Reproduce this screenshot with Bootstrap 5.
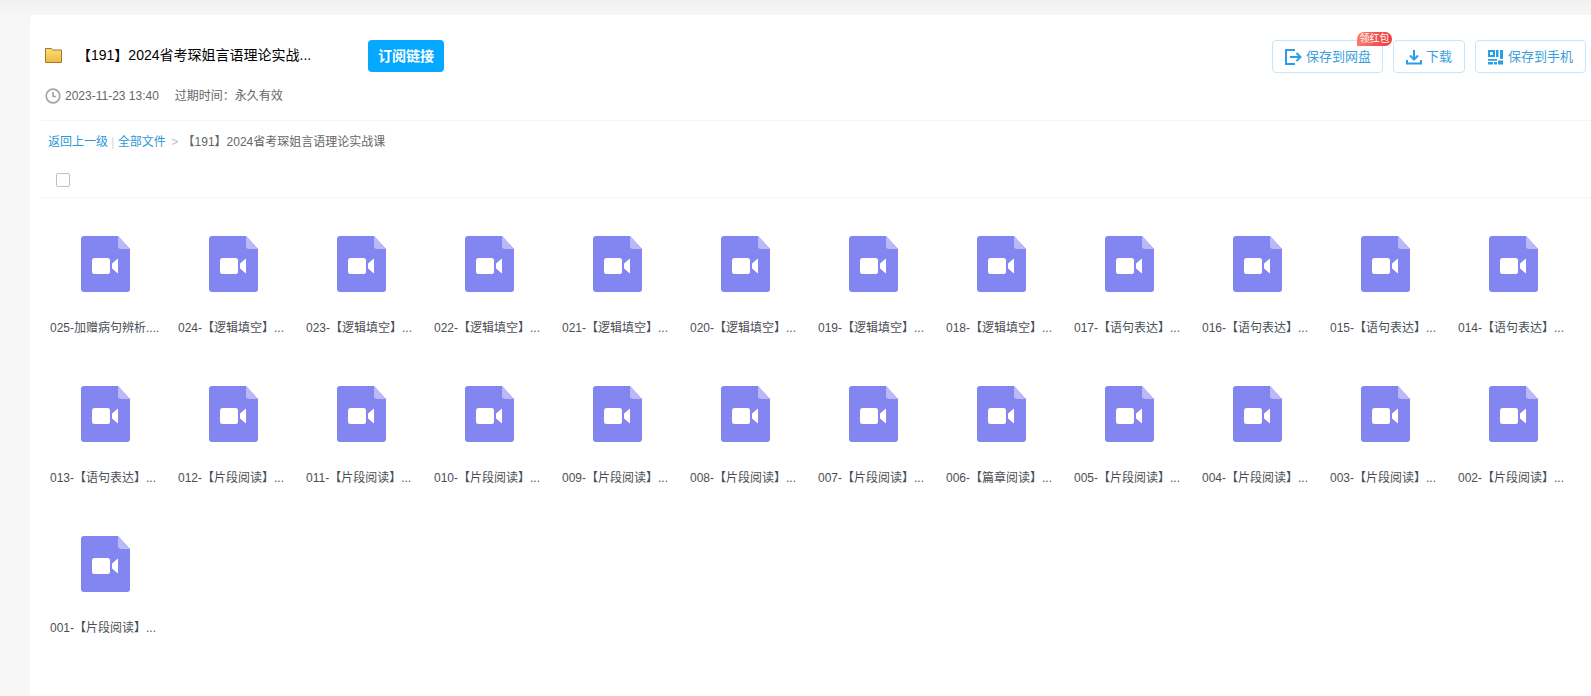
<!DOCTYPE html>
<html lang="zh">
<head>
<meta charset="utf-8">
<title>文件</title>
<link href="https://cdn.jsdelivr.net/npm/bootstrap@5.3.0/dist/css/bootstrap.min.css" rel="stylesheet">
<style>
html,body{height:100%;overflow:hidden}
body{background:#f7f7f7;font-family:"Liberation Sans","Noto Sans CJK SC",sans-serif;color:#333}
.top-shade{height:15px;background:linear-gradient(#f1f1f1,#f7f7f7)}
.sheet{margin-left:30px;background:#fff;border-radius:5px 0 0 0;height:681px;padding-left:11px;overflow:hidden}
.head-zone{height:106px;padding:25px 5px 0 4px;border-bottom:1px solid #f4f5f6}
.title-row{height:32px}
.folder-ic{width:17px;height:16px;flex:none;margin-top:-3px}
.title-text{font-size:14px;color:#000;width:291px;margin-left:15px;white-space:nowrap;line-height:32px;margin-top:-3px}
.sub-btn{width:76px;height:32px;background:#06a7ff;color:#fff;border:0;border-radius:4px;font-size:14px;font-weight:700;padding:0}
.act-group{column-gap:10px}
.act-btn{height:33px;background:#fff;border:1px solid #c7e6f7;border-radius:4px;color:#3b9fdc;font-size:13px;padding:0;display:flex;align-items:center;justify-content:center;gap:4px;position:relative}
.w-save{width:111px}.w-down{width:72px}
.act-btn svg{flex:none}
.red-tag{position:absolute;left:84px;top:-9px;width:35px;height:14px;border-radius:7px 7px 7px 0;background:linear-gradient(90deg,#fb7a6b,#ee3a3f);color:#fff;font-size:10px;line-height:14px;text-align:center;white-space:nowrap}
.meta-row{font-size:12px;color:#666;margin-top:12px;height:24px}
.clock-ic{width:16px;height:16px;flex:none;margin-right:4px}
.time-gap{margin-left:16px}
.crumb-row{font-size:12px;height:42px;padding-left:7px;line-height:42px;color:#666;white-space:nowrap}
.crumb-row a{color:#2a97d6;text-decoration:none}
.crumb-sep{color:#c5dcea}
.crumb-gt{color:#bbb;margin:0 1px 0 2px}
.tick-row{height:35px;border-bottom:1px solid #f4f5f6;padding:9px 0 0 15px}
.tick-box{width:14px;height:14px;border:1px solid #b9c2cc;border-radius:2px;background:#fff;display:block;margin-top:1px}
.file-cell{width:128px;height:150px;padding-top:38px;text-align:center}
.file-ic{width:49px;height:56px;display:block;margin:0 auto}
.file-name{font-size:12px;color:#4a4f57;margin-top:28px;line-height:16px;white-space:nowrap;text-align:left;padding-left:9px}
</style>
</head>
<body>
<svg width="0" height="0" class="d-block position-absolute">
  <defs><linearGradient id="fold" x1="0" y1="0" x2="0" y2="1"><stop offset="0" stop-color="#fbe07e"/><stop offset="1" stop-color="#f0b93a"/></linearGradient></defs>
  <symbol id="vid" viewBox="0 0 49 56">
    <path d="M3 0H37L49 13V53a3 3 0 0 1-3 3H3a3 3 0 0 1-3-3V3a3 3 0 0 1 3-3Z" fill="#8385f0"/>
    <path d="M37 0L49 13H40a3 3 0 0 1-3-3Z" fill="#b9b9f8"/>
    <rect x="11" y="22" width="18" height="16" rx="2.5" fill="#fff"/>
    <path d="M37 22.5V37.5L31 32.5V27.5Z" fill="#fff"/>
  </symbol>
</svg>
<div class="top-shade"></div>
<main class="sheet">
  <header class="head-zone">
    <div class="title-row d-flex align-items-center">
      <svg class="folder-ic" viewBox="0 0 17 16"><path d="M.5 1.500h6l1 1.500h9v12.500H.5Z" fill="url(#fold)" stroke="#a07a2a"/></svg>
      <div class="title-text">【191】2024省考琛姐言语理论实战...</div>
      <button class="sub-btn" type="button">订阅链接</button>
      <div class="act-group ms-auto d-flex align-self-start">
        <button class="act-btn w-save" type="button">
          <svg width="18" height="18" viewBox="0 0 18 18" fill="none" stroke="#2a9fe8" stroke-width="2"><path d="M11 2H2v14h9"/><path d="M6 9h10M12.500 5l4 4-4 4"/></svg>保存到网盘
          <span class="red-tag">领红包</span>
        </button>
        <button class="act-btn w-down" type="button">
          <svg width="16" height="16" viewBox="0 0 16 16" fill="none" stroke="#2a9fe8" stroke-width="2"><path d="M8 1v9M4 6.500 8 10.500 12 6.500"/><path d="M1 11v3.500h14V11"/></svg>下载
        </button>
        <button class="act-btn w-save" type="button">
          <svg width="16" height="16" viewBox="0 0 16 16" fill="#2a9fe8"><path d="M0 1h7v7H0Zm2 2v3h3V3ZM8 1h2.500v7H8ZM12 1h3v9h-3ZM0 10h9v1.800H0ZM0 13h5v2.500H0ZM6 13h3v2.500H6ZM10 11.500h5v4h-5Z"/></svg>保存到手机
        </button>
      </div>
    </div>
    <div class="meta-row d-flex align-items-center">
      <svg class="clock-ic" viewBox="0 0 16 16" fill="none" stroke="#a5a5a5" stroke-width="1.700"><circle cx="8" cy="8" r="6.800"/><path d="M8 4v4.500h3"/></svg>
      <span>2023-11-23 13:40</span><span class="time-gap">过期时间：永久有效</span>
    </div>
  </header>
  <nav class="crumb-row"><a href="#">返回上一级</a> <span class="crumb-sep">|</span> <a href="#">全部文件</a> <span class="crumb-gt">&gt;</span> 【191】2024省考琛姐言语理论实战课</nav>
  <div class="tick-row"><span class="tick-box"></span></div>
  <section class="file-grid d-flex flex-wrap">
    <div class="file-cell"><svg class="file-ic"><use href="#vid"/></svg><div class="file-name">025-加赠病句辨析....</div></div>
    <div class="file-cell"><svg class="file-ic"><use href="#vid"/></svg><div class="file-name">024-【逻辑填空】...</div></div>
    <div class="file-cell"><svg class="file-ic"><use href="#vid"/></svg><div class="file-name">023-【逻辑填空】...</div></div>
    <div class="file-cell"><svg class="file-ic"><use href="#vid"/></svg><div class="file-name">022-【逻辑填空】...</div></div>
    <div class="file-cell"><svg class="file-ic"><use href="#vid"/></svg><div class="file-name">021-【逻辑填空】...</div></div>
    <div class="file-cell"><svg class="file-ic"><use href="#vid"/></svg><div class="file-name">020-【逻辑填空】...</div></div>
    <div class="file-cell"><svg class="file-ic"><use href="#vid"/></svg><div class="file-name">019-【逻辑填空】...</div></div>
    <div class="file-cell"><svg class="file-ic"><use href="#vid"/></svg><div class="file-name">018-【逻辑填空】...</div></div>
    <div class="file-cell"><svg class="file-ic"><use href="#vid"/></svg><div class="file-name">017-【语句表达】...</div></div>
    <div class="file-cell"><svg class="file-ic"><use href="#vid"/></svg><div class="file-name">016-【语句表达】...</div></div>
    <div class="file-cell"><svg class="file-ic"><use href="#vid"/></svg><div class="file-name">015-【语句表达】...</div></div>
    <div class="file-cell"><svg class="file-ic"><use href="#vid"/></svg><div class="file-name">014-【语句表达】...</div></div>
    <div class="file-cell"><svg class="file-ic"><use href="#vid"/></svg><div class="file-name">013-【语句表达】...</div></div>
    <div class="file-cell"><svg class="file-ic"><use href="#vid"/></svg><div class="file-name">012-【片段阅读】...</div></div>
    <div class="file-cell"><svg class="file-ic"><use href="#vid"/></svg><div class="file-name">011-【片段阅读】...</div></div>
    <div class="file-cell"><svg class="file-ic"><use href="#vid"/></svg><div class="file-name">010-【片段阅读】...</div></div>
    <div class="file-cell"><svg class="file-ic"><use href="#vid"/></svg><div class="file-name">009-【片段阅读】...</div></div>
    <div class="file-cell"><svg class="file-ic"><use href="#vid"/></svg><div class="file-name">008-【片段阅读】...</div></div>
    <div class="file-cell"><svg class="file-ic"><use href="#vid"/></svg><div class="file-name">007-【片段阅读】...</div></div>
    <div class="file-cell"><svg class="file-ic"><use href="#vid"/></svg><div class="file-name">006-【篇章阅读】...</div></div>
    <div class="file-cell"><svg class="file-ic"><use href="#vid"/></svg><div class="file-name">005-【片段阅读】...</div></div>
    <div class="file-cell"><svg class="file-ic"><use href="#vid"/></svg><div class="file-name">004-【片段阅读】...</div></div>
    <div class="file-cell"><svg class="file-ic"><use href="#vid"/></svg><div class="file-name">003-【片段阅读】...</div></div>
    <div class="file-cell"><svg class="file-ic"><use href="#vid"/></svg><div class="file-name">002-【片段阅读】...</div></div>
    <div class="file-cell"><svg class="file-ic"><use href="#vid"/></svg><div class="file-name">001-【片段阅读】...</div></div>
  </section>
</main>
</body>
</html>
